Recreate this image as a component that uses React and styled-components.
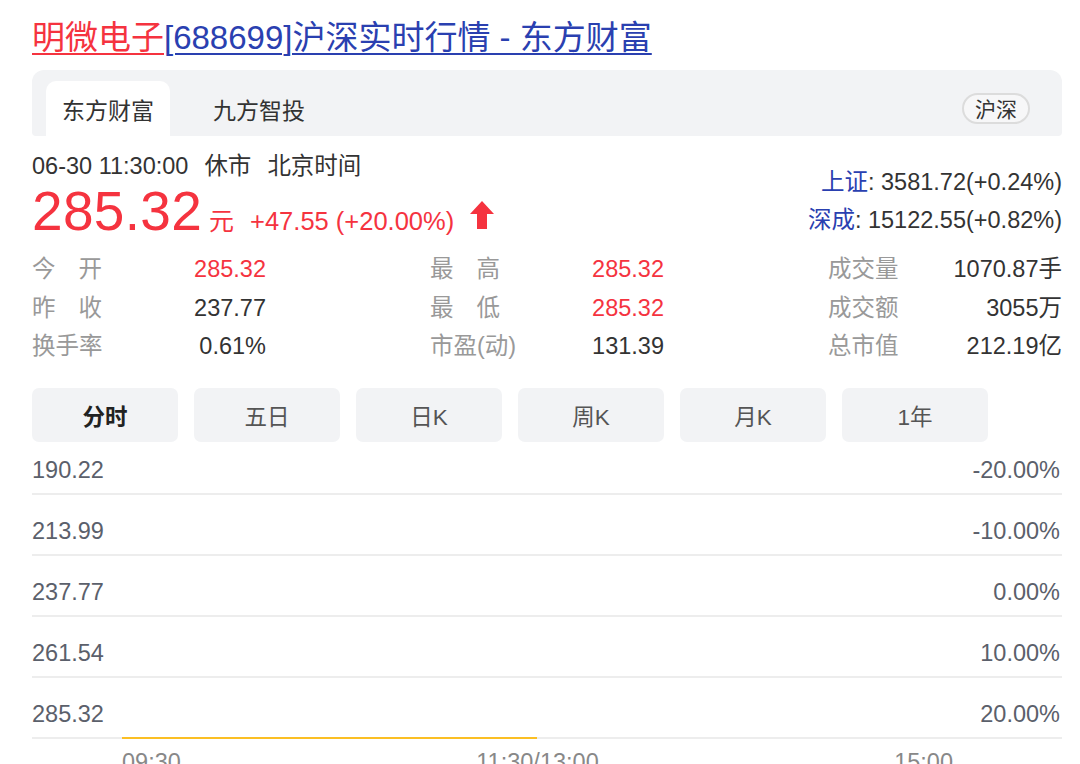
import styled, { createGlobalStyle } from "styled-components";

const GlobalStyle = createGlobalStyle`
    html, body {
        margin: 0;
        padding: 0;
        background: #fff;
        overflow: hidden;
    }
    body {
        font-family: "Liberation Sans", "Noto Sans CJK SC", sans-serif;
        color: #333;
    }
`;

const RED = "#f5333f";
const BLUE = "#2a40b0";

const Page = styled.div`
    width: 1030px;
    margin-left: 32px;
    padding-top: 18px;
`;

const Title = styled.h1`
    margin: 0;
    font-size: 33px;
    line-height: 40px;
    font-weight: normal;
    white-space: nowrap;
    a {
        text-decoration: underline;
        text-underline-offset: 4px;
        text-decoration-thickness: 2px;
    }
    .name { color: ${RED}; }
    .rest { color: ${BLUE}; }
`;

const TabPanel = styled.div`
    margin-top: 12px;
    height: 66px;
    background: #f2f3f5;
    border-radius: 12px 12px 4px 4px;
    display: flex;
    align-items: flex-end;
    gap: 27px;
    padding: 0 32px 0 14px;
`;

const Tab = styled.div`
    height: 55px;
    padding: 0 16px;
    display: flex;
    align-items: center;
    font-size: 23px;
    color: #333;
    background: ${(p) => (p.$active ? "#fff" : "transparent")};
    border-radius: 10px 10px 0 0;
`;

const Pill = styled.div`
    margin-left: auto;
    align-self: center;
    margin-top: 10px;
    height: 27px;
    padding: 0 11px;
    display: flex;
    align-items: center;
    border: 2px solid #dcdcdc;
    border-radius: 16px;
    background: #f7f7f8;
    font-size: 21px;
    color: #333;
`;

const Quote = styled.div`
    margin-top: 14px;
    display: flex;
    justify-content: space-between;
    align-items: flex-end;
`;

const TimeRow = styled.div`
    font-size: 23.5px;
    line-height: 32px;
    color: #333;
    display: flex;
    gap: 16px;
`;

const PriceRow = styled.div`
    display: flex;
    align-items: baseline;
    color: ${RED};
    height: 58px;
`;

const Price = styled.span`
    font-size: 55px;
    line-height: 58px;
    letter-spacing: 0.3px;
`;

const Unit = styled.span`
    font-size: 25px;
    margin-left: 7px;
`;

const Change = styled.span`
    font-size: 25.5px;
    margin-left: 16px;
`;

const Arrow = styled.svg`
    width: 26px;
    height: 30px;
    margin-left: 15px;
    align-self: center;
    margin-top: 8px;
`;

const IndexBox = styled.div`
    text-align: right;
    font-size: 23.5px;
    line-height: 38px;
    color: #333;
    padding-bottom: 1px;
    span { color: ${BLUE}; }
`;

const Stats = styled.div`
    margin-top: 10px;
    display: grid;
    grid-template-columns: repeat(3, 234px);
    column-gap: 164px;
`;

const Stat = styled.div`
    display: flex;
    justify-content: space-between;
    font-size: 23.5px;
    line-height: 38.5px;
`;

const Label = styled.span`
    color: #999;
    width: ${(p) => (p.$spread ? "70px" : "auto")};
    display: flex;
    justify-content: space-between;
`;

const Value = styled.span`
    color: ${(p) => (p.$red ? RED : "#333")};
`;

const Periods = styled.div`
    margin-top: 22px;
    display: flex;
    gap: 16px;
`;

const Period = styled.div`
    width: 146px;
    height: 54px;
    border-radius: 7px;
    background: #f2f3f5;
    display: flex;
    align-items: center;
    justify-content: center;
    font-size: 22.5px;
    color: ${(p) => (p.$active ? "#222" : "#555")};
    font-weight: ${(p) => (p.$active ? "bold" : "normal")};
`;

const Chart = styled.div`
    display: flex;
    flex-direction: column;
    gap: 8px;
`;

const GridRow = styled.div`
    position: relative;
    padding: 13px 2px 7px 0;
    border-bottom: 2px solid #ededed;
    display: flex;
    justify-content: space-between;
    font-size: 23.5px;
    line-height: 31px;
    color: #5b606b;
`;

const PriceLine = styled.div`
    position: absolute;
    left: 90px;
    width: 415px;
    bottom: -2px;
    height: 2px;
    background: #fbbf24;
`;

const TimeAxis = styled.div`
    margin-left: 90px;
    width: 831px;
    margin-top: 8px;
    display: flex;
    justify-content: space-between;
    font-size: 23.5px;
    line-height: 30px;
    color: #888;
`;

const stats = [
    [
        { label: ["今", "开"], value: "285.32", red: true },
        { label: ["最", "高"], value: "285.32", red: true },
        { label: "成交量", value: "1070.87手" },
    ],
    [
        { label: ["昨", "收"], value: "237.77" },
        { label: ["最", "低"], value: "285.32", red: true },
        { label: "成交额", value: "3055万" },
    ],
    [
        { label: "换手率", value: "0.61%" },
        { label: "市盈(动)", value: "131.39" },
        { label: "总市值", value: "212.19亿" },
    ],
];

const periods = ["分时", "五日", "日K", "周K", "月K", "1年"];

const levels = [
    ["190.22", "-20.00%"],
    ["213.99", "-10.00%"],
    ["237.77", "0.00%"],
    ["261.54", "10.00%"],
    ["285.32", "20.00%"],
];

const App = () => {
    return (
        <>
            <GlobalStyle />
            <Page>
                <Title>
                    <a className="name">明微电子</a>
                    <a className="rest">[688699]沪深实时行情 - 东方财富</a>
                </Title>

                <TabPanel>
                    <Tab $active>东方财富</Tab>
                    <Tab>九方智投</Tab>
                    <Pill>沪深</Pill>
                </TabPanel>

                <Quote>
                    <div>
                        <TimeRow>
                            <span>06-30 11:30:00</span>
                            <span>休市</span>
                            <span>北京时间</span>
                        </TimeRow>
                        <PriceRow>
                            <Price>285.32</Price>
                            <Unit>元</Unit>
                            <Change>+47.55 (+20.00%)</Change>
                            <Arrow viewBox="0 0 26 30">
                                <path d="M13 1 L25 14 L18 14 L18 29 L8 29 L8 14 L1 14 Z" fill={RED} />
                            </Arrow>
                        </PriceRow>
                    </div>
                    <IndexBox>
                        <div><span>上证</span>: 3581.72(+0.24%)</div>
                        <div><span>深成</span>: 15122.55(+0.82%)</div>
                    </IndexBox>
                </Quote>

                <Stats>
                    {stats.flat().map((s, i) => (
                        <Stat key={i}>
                            {Array.isArray(s.label) ? (
                                <Label $spread>
                                    <span>{s.label[0]}</span>
                                    <span>{s.label[1]}</span>
                                </Label>
                            ) : (
                                <Label>{s.label}</Label>
                            )}
                            <Value $red={s.red}>{s.value}</Value>
                        </Stat>
                    ))}
                </Stats>

                <Periods>
                    {periods.map((p, i) => (
                        <Period key={p} $active={i === 0}>{p}</Period>
                    ))}
                </Periods>

                <Chart>
                    {levels.map(([price, pct], i) => (
                        <GridRow key={price}>
                            <span>{price}</span>
                            <span>{pct}</span>
                            {i === levels.length - 1 && <PriceLine />}
                        </GridRow>
                    ))}
                </Chart>
                <TimeAxis>
                    <span>09:30</span>
                    <span>11:30/13:00</span>
                    <span>15:00</span>
                </TimeAxis>
            </Page>
        </>
    );
};

export default App;
